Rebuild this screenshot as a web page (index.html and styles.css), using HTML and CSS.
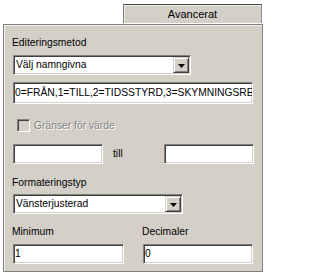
FILE: index.html
```html
<!DOCTYPE html>
<html lang="sv">
<head>
<meta charset="utf-8">
<title>Avancerat</title>
<link rel="stylesheet" href="styles.css">
</head>
<body>
<div class="tabs">
  <div class="tab">Avancerat</div>
</div>
<div class="panel">
  <div class="label">Editeringsmetod</div>
  <div class="select select-wide">
    <span class="select-text">Välj namngivna</span>
    <span class="drop-btn"><svg width="7" height="4" viewBox="0 0 7 4"><path d="M0 0H7L3.5 4Z" fill="#000"/></svg></span>
  </div>
  <div class="field field-full"><span class="field-text">0=FRÅN,1=TILL,2=TIDSSTYRD,3=SKYMNINGSRE</span></div>
  <div class="check-row">
    <span class="checkbox"></span>
    <span class="check-label">Gränser för värde</span>
  </div>
  <div class="range-row">
    <div class="field field-range"></div>
    <span class="till">till</span>
    <div class="field field-range"></div>
  </div>
  <div class="label label-format">Formateringstyp</div>
  <div class="select select-format">
    <span class="select-text">Vänsterjusterad</span>
    <span class="drop-btn"><svg width="7" height="4" viewBox="0 0 7 4"><path d="M0 0H7L3.5 4Z" fill="#000"/></svg></span>
  </div>
  <div class="pair-labels">
    <span class="label">Minimum</span>
    <span class="label">Decimaler</span>
  </div>
  <div class="pair-fields">
    <div class="field field-min"><span class="field-text">1</span></div>
    <div class="field field-dec"><span class="field-text">0</span></div>
  </div>
</div>
</body>
</html>
```

FILE: styles.css
```css
* { box-sizing: border-box; }

html, body {
  margin: 0;
  padding: 0;
  background: #ffffff;
}

body {
  width: 266px;
  height: 276px;
  font-family: "Liberation Sans", Arial, sans-serif;
  font-size: 10.3px;
  color: #000;
  overflow: hidden;
}

.tabs {
  height: 24px;
  padding-top: 4px;
  padding-right: 4px;
  display: flex;
  justify-content: flex-end;
}

.tab {
  width: 139px;
  height: 19px;
  background: #d4d0c8;
  border-top: 1px solid #4a4a4a;
  border-left: 1px solid #7c7c7c;
  border-right: 1px solid #8c8c8c;
  box-shadow: inset 1px 1px 0 #ecebe7;
  text-align: center;
  font-size: 11px;
  line-height: 18px;
}

.panel {
  margin-left: 3px;
  width: 260px;
  height: 248px;
  background: #d4d0c8;
  border: 1px solid #808080;
  box-shadow: inset 1px 1px 0 #f2f1ee;
  padding: 12px 0 0 9px;
}

.label {
  display: block;
  height: 12px;
  line-height: 12px;
  margin-left: -1px;
  white-space: nowrap;
}

.select,
.field {
  position: relative;
  background: #fff;
  border-top: 1px solid #808080;
  border-left: 1px solid #808080;
  border-right: 1px solid #ffffff;
  border-bottom: 1px solid #ffffff;
  box-shadow: inset 1px 1px 0 #404040, inset -1px -1px 0 #d4d0c8;
  overflow: hidden;
  white-space: nowrap;
}

.select {
  height: 20px;
  margin-top: 6px;
  display: flex;
  align-items: center;
  padding: 2px 1px 2px 2px;
}

.select-wide { width: 178px; }

.select-text {
  flex: 1;
  padding-left: 0;
  line-height: 16px;
}

.drop-btn {
  width: 16px;
  height: 16px;
  background: #d4d0c8;
  border-top: 1px solid #d4d0c8;
  border-left: 1px solid #d4d0c8;
  border-right: 1px solid #404040;
  border-bottom: 1px solid #404040;
  box-shadow: inset 1px 1px 0 #fff, inset -1px -1px 0 #808080;
  display: flex;
  align-items: center;
  justify-content: center;
}

.drop-btn svg { display: block; margin-top: 1px; }

.field-full {
  width: 240px;
  height: 22px;
  margin-top: 7px;
  line-height: 20px;
  padding-left: 1px;
}

.field-text { line-height: inherit; }

.check-row {
  margin-top: 15px;
  margin-left: 4px;
  height: 13px;
  display: flex;
  align-items: center;
}

.checkbox {
  width: 13px;
  height: 13px;
  background: #d4d0c8;
  border-top: 1px solid #808080;
  border-left: 1px solid #808080;
  border-right: 1px solid #fff;
  border-bottom: 1px solid #fff;
  box-shadow: inset 1px 1px 0 #404040, inset -1px -1px 0 #d4d0c8;
}

.check-label {
  margin-left: 4px;
  color: #808080;
  text-shadow: 1px 1px 0 #ffffff;
  line-height: 13px;
}

.range-row {
  margin-top: 12px;
  height: 20px;
  display: flex;
  align-items: center;
}

.field-range {
  width: 90px;
  height: 20px;
}

.till {
  width: 61px;
  padding-left: 10px;
  line-height: 20px;
}

.label-format { margin-top: 13px; }

.select-format {
  width: 170px;
  margin-top: 5px;
}

.pair-labels {
  margin-top: 12px;
  height: 12px;
  display: grid;
  grid-template-columns: 130px 110px;
}

.pair-fields {
  margin-top: 6px;
  display: grid;
  grid-template-columns: 130px 110px;
}

.field-min,
.field-dec {
  height: 20px;
  line-height: 18px;
  padding-left: 1px;
}

.field-min { width: 111px; }
.field-dec { width: 110px; }
```
